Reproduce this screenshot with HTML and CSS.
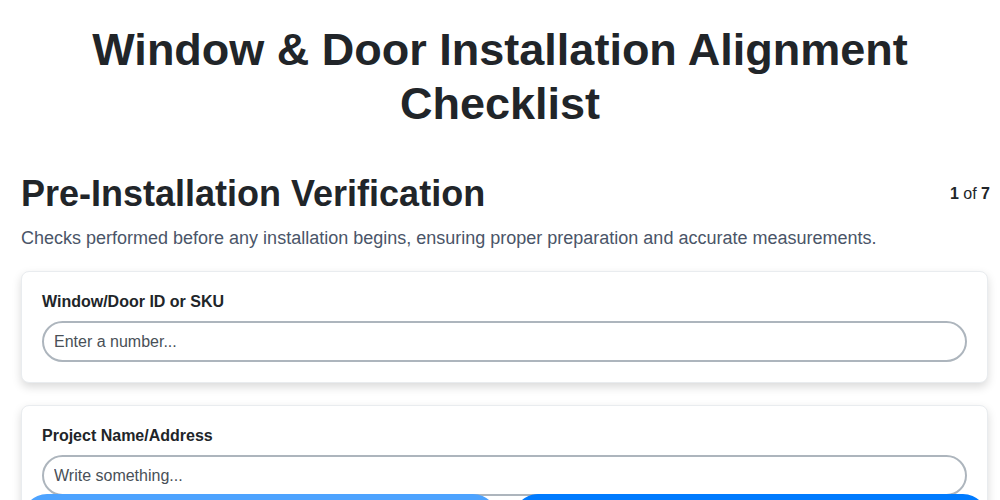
FILE: index.html
```html
<!DOCTYPE html>
<html lang="en">
<head>
<meta charset="utf-8">
<title>Window &amp; Door Installation Alignment Checklist</title>
<link rel="stylesheet" href="styles.css">
</head>
<body>
<main class="page">
  <h1 class="title">Window &amp; Door Installation Alignment Checklist</h1>
  <section class="step">
    <div class="step-head">
      <h2 class="step-title">Pre-Installation Verification</h2>
      <div class="step-count"><b>1</b> of <b>7</b></div>
    </div>
    <p class="step-desc">Checks performed before any installation begins, ensuring proper preparation and accurate measurements.</p>
    <div class="card">
      <label class="field-label" for="f1">Window/Door ID or SKU</label>
      <input class="field-input" id="f1" type="text" placeholder="Enter a number...">
    </div>
    <div class="card">
      <label class="field-label" for="f2">Project Name/Address</label>
      <input class="field-input" id="f2" type="text" placeholder="Write something...">
    </div>
    <div class="card">
      <label class="field-label" for="f3">Installer Name</label>
      <input class="field-input" id="f3" type="text" placeholder="Write something...">
    </div>
  </section>
</main>
<nav class="nav-bar">
  <button class="btn btn-prev" type="button">Previous</button>
  <button class="btn btn-next" type="button">Next</button>
</nav>
</body>
</html>
```
FILE: styles.css
```css
* { box-sizing: border-box; }
html, body { margin: 0; padding: 0; background: #ffffff; }
body {
  font-family: "Liberation Sans", Arial, sans-serif;
  color: #212529;
}
.page {
  padding: 0 10px 80px;
}
.title {
  margin: 0;
  padding-top: 23px;
  font-size: 45px;
  line-height: 54px;
  font-weight: 700;
  text-align: center;
  color: #212529;
}
.step {
  margin-top: 41px;
  padding-left: 11px;
}
.step-head {
  display: flex;
  justify-content: space-between;
  align-items: center;
}
.step-title {
  margin: 0;
  font-size: 36px;
  line-height: 44px;
  font-weight: 700;
  color: #212529;
}
.step-count {
  font-size: 16px;
  color: #212529;
}
.step-desc {
  margin: 10px 0 21px;
  font-size: 18px;
  line-height: 24px;
  color: #4a5568;
}
.card {
  display: flex;
  flex-direction: column;
  margin-right: 2px;
  margin-bottom: 22px;
  padding: 20px;
  background: #fff;
  border: 1px solid #e9ecef;
  border-radius: 8px;
  box-shadow: 0 4px 10px rgba(0, 0, 0, 0.15);
}
.field-label {
  font-size: 16px;
  line-height: 19px;
  font-weight: 700;
  margin-bottom: 10px;
}
.field-input {
  height: 41px;
  padding: 0 10px;
  font-family: inherit;
  font-size: 16px;
  color: #495057;
  border: 2px solid #adb5bd;
  border-radius: 21px;
  background: #fff;
  outline: none;
}
.field-input::placeholder { color: #495057; opacity: 1; }
.nav-bar {
  position: fixed;
  left: 22px;
  right: 12px;
  bottom: -54px;
  display: grid;
  grid-template-columns: 1fr 1fr;
  gap: 15px;
}
.btn {
  height: 60px;
  border: none;
  border-radius: 25px;
  color: #fff;
  font-family: inherit;
  font-size: 18px;
  font-weight: 700;
}
.btn-prev { background: #4da3ff; }
.btn-next { background: #007bff; }
```
